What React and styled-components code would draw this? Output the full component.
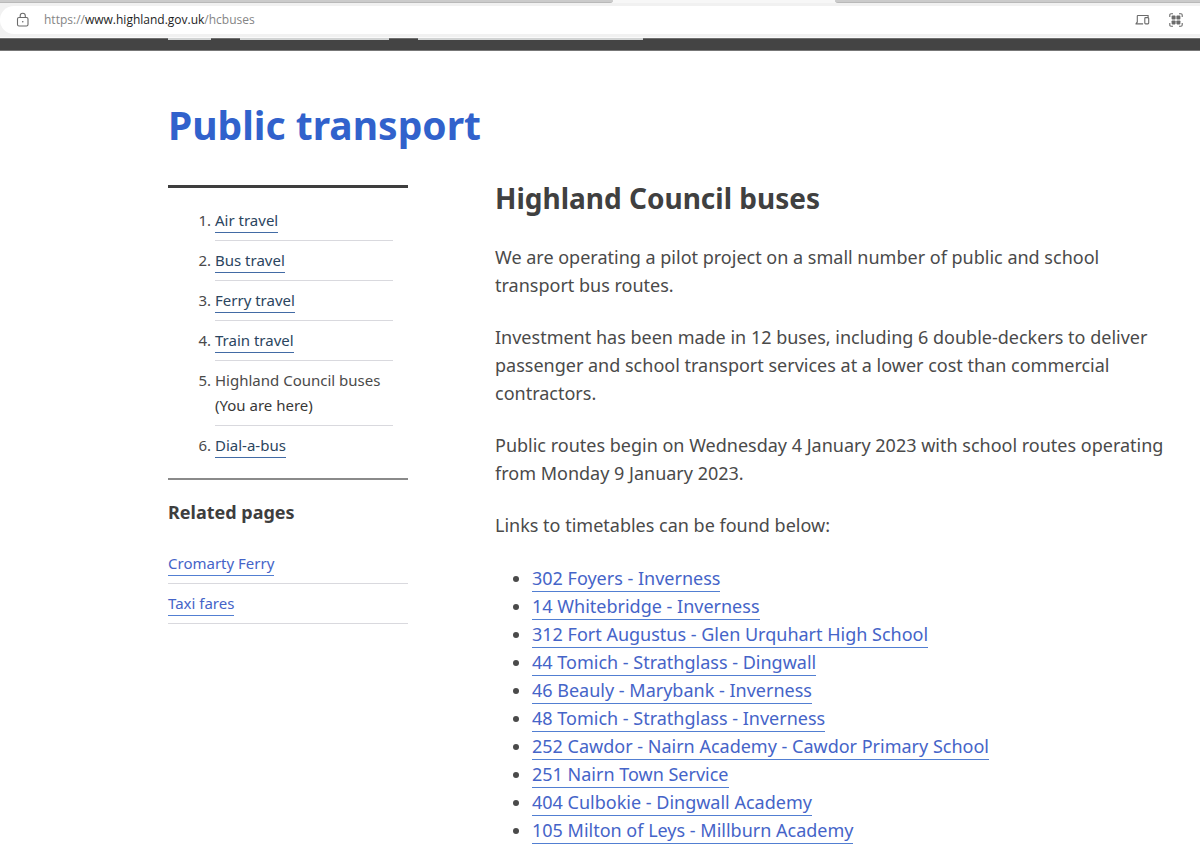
import React from "react";
import styled, { createGlobalStyle, css } from "styled-components";

const GlobalStyle = createGlobalStyle`
  *, *::before, *::after { box-sizing: border-box; }
  body {
    margin: 0;
    background: #fff;
    color: #4a4a4a;
    font-family: "Noto Sans", "Open Sans", sans-serif;
    font-size: 18px;
    line-height: 28px;
  }
`;

const TabStrip = styled.div`
  display: flex;
  height: 3px;
  background: #f7f7f7;
`;

const InactiveTab = styled.div`
  flex: ${({ $grow }) => $grow};
  background: #cbcbcb;
  border-bottom: 1px solid #b9b9b9;
  border-radius: ${({ $last }) => ($last ? "0 0 0 3px" : "0 0 3px 0")};
`;

const ActiveTab = styled.div`
  flex: 222;
`;

const AddressBar = styled.div`
  display: flex;
  padding: 3px 0 3px;
  background: #f1f1f1;
  border-bottom: 1px solid #fafafa;
`;

const AddressField = styled.div`
  display: flex;
  flex: 1;
  align-items: center;
  height: 28px;
  padding: 0 17px 0 16px;
  background: #fff;
  border-radius: 14px 0 0 14px;
`;

const ChromeButton = styled.button`
  display: flex;
  padding: 0;
  border: 0;
  background: none;
  color: #6b6b6b;
  margin-left: ${({ $gap }) => $gap || 0}px;
`;

const Address = styled.div`
  flex: 1;
  margin-left: 13px;
  color: #858585;
  font-family: "Open Sans", "Noto Sans", sans-serif;
  font-size: 12px;
  line-height: 16px;
  outline: none;
`;

const Domain = styled.span`
  color: #1d1d1d;
`;

const SiteNav = styled.div`
  display: flex;
  gap: 29px;
  height: 13px;
  padding-left: 14%;
  background: #444;
  border-top: 1px solid #6f6f6f;
  border-bottom: 1px solid #777;
`;

const NavTabEdge = styled.span`
  width: ${({ $width }) => $width}px;
  height: 2px;
  margin-top: -1px;
  background: #d2d4d4;
`;

const Page = styled.div`
  padding: 45px 30px 24px 14%;
`;

const Title = styled.h1`
  margin: 0 0 31px;
  color: #3162cc;
  font-size: 39px;
  line-height: 58px;
`;

const Columns = styled.div`
  display: grid;
  grid-template-columns: 240px minmax(0, 1fr);
  column-gap: 87px;
  align-items: start;
`;

const Contents = styled.nav`
  padding: 20px 15px 20px 47px;
  border-top: 3px solid #3e3e3e;
  border-bottom: 2px solid #8a8a8a;
`;

const TextLink = styled.a`
  color: ${({ $dark }) => ($dark ? "#2b4560" : "#4564c8")};
  border-bottom: 1px solid ${({ $dark }) => ($dark ? "#426ba5" : "#527fd2")};
  padding-bottom: 1px;
  text-decoration: none;
`;

const SideList = styled.ul`
  margin: 0;
  padding: 0;
  list-style: ${({ $numbered }) => ($numbered ? "decimal" : "none")};
  font-size: 15px;
  line-height: 25px;

  ${TextLink} {
    padding-bottom: 2px;
  }
`;

const SideItem = styled.li`
  padding: 0 0 7px;
  border-bottom: 1px solid #d9d9de;

  & + & {
    padding-top: 7px;
  }

  ${({ $plain }) =>
    $plain &&
    css`
      padding-bottom: 0;
      border-bottom: 0;
    `}
`;

const Here = styled.span`
  display: block;
  color: #383838;
`;

const RelatedHeading = styled.h2`
  margin: 18px 0 25px;
  color: #3e3e3e;
  font-size: 18px;
  line-height: 28px;
`;

const Heading = styled.h2`
  margin: 0 0 32px;
  color: #404040;
  font-size: 28px;
  line-height: 26px;
`;

const Paragraph = styled.p`
  margin: 0 0 24px;
`;

const RouteList = styled.ul`
  margin: 25px 0 0;
  padding-left: 37px;
`;

const contents = ["Air travel", "Bus travel", "Ferry travel", "Train travel", "Highland Council buses", "Dial-a-bus"];
const related = ["Cromarty Ferry", "Taxi fares"];
const routes = [
  "302 Foyers - Inverness",
  "14 Whitebridge - Inverness",
  "312 Fort Augustus - Glen Urquhart High School",
  "44 Tomich - Strathglass - Dingwall",
  "46 Beauly - Marybank - Inverness",
  "48 Tomich - Strathglass - Inverness",
  "252 Cawdor - Nairn Academy - Cawdor Primary School",
  "251 Nairn Town Service",
  "404 Culbokie - Dingwall Academy",
  "105 Milton of Leys - Millburn Academy",
];

const LockIcon = () => (
  <svg width="15" height="16" viewBox="0 0 15 16" fill="none" stroke="currentColor" strokeWidth="1.1">
    <rect x="1.5" y="5.5" width="10.5" height="8.5" rx="1.5" />
    <path d="M4.2 5.5V3.8a2.55 2.55 0 0 1 5.1 0v1.7" />
    <circle cx="6.75" cy="9.8" r="0.8" fill="currentColor" stroke="none" />
  </svg>
);

const DevicesIcon = () => (
  <svg width="15" height="12" viewBox="0 0 15 12" fill="none" stroke="currentColor" strokeWidth="1.1">
    <path d="M2.3 8.6V2.1a.6.6 0 0 1 .6-.6h10.2v1.6" />
    <path d="M0.5 9.9h7.6M2.3 8.2.8 9.9" />
    <rect x="9.8" y="3.6" width="3.9" height="6.3" rx="0.8" />
  </svg>
);

const CodeIcon = () => (
  <svg width="14" height="14" viewBox="0 0 14 14" fill="none" stroke="currentColor" strokeWidth="1.1">
    <path d="M.8 4V2Q.8.8 2 .8h2M10 .8h2q1.2 0 1.2 1.2v2M13.2 10v2q0 1.2-1.2 1.2h-2M4 13.2H2Q.8 13.2.8 12v-2" />
    <g fill="currentColor" stroke="none">
      <rect x="2.6" y="2.6" width="4" height="4" rx=".8" />
      <rect x="7.4" y="2.6" width="4" height="4" rx=".8" />
      <rect x="2.6" y="7.4" width="4" height="4" rx=".8" />
      <rect x="7.4" y="7.4" width="4" height="4" rx=".8" />
    </g>
  </svg>
);

export default function App() {
  return (
    <>
      <GlobalStyle />
      <header>
        <TabStrip>
          <InactiveTab $grow={613} />
          <ActiveTab />
          <InactiveTab $grow={365} $last />
        </TabStrip>
        <AddressBar>
          <AddressField>
            <ChromeButton aria-label="View site information"><LockIcon /></ChromeButton>
            <Address role="textbox" aria-label="Address" tabIndex={0}>
              https://<Domain>www.highland.gov.uk</Domain>/hcbuses
            </Address>
            <ChromeButton aria-label="Send to your devices"><DevicesIcon /></ChromeButton>
            <ChromeButton aria-label="Create QR code" $gap={19}><CodeIcon /></ChromeButton>
          </AddressField>
        </AddressBar>
        <SiteNav>
          <NavTabEdge $width={43} />
          <NavTabEdge $width={149} />
          <NavTabEdge $width={225} />
        </SiteNav>
      </header>
      <Page>
        <Title>Public transport</Title>
        <Columns>
          <aside>
            <Contents aria-label="Contents">
              <SideList as="ol" $numbered>
                {contents.map((label, i) => (
                  <SideItem key={label} $plain={i === contents.length - 1}>
                    {label === "Highland Council buses" ? (
                      <>{label}<Here>(You are here)</Here></>
                    ) : (
                      <TextLink href="#" $dark>{label}</TextLink>
                    )}
                  </SideItem>
                ))}
              </SideList>
            </Contents>
            <RelatedHeading>Related pages</RelatedHeading>
            <SideList>
              {related.map((label) => (
                <SideItem key={label}><TextLink href="#">{label}</TextLink></SideItem>
              ))}
            </SideList>
          </aside>
          <main>
            <Heading>Highland Council buses</Heading>
            <Paragraph>
              We are operating a pilot project on a small number of public and school transport bus routes.
            </Paragraph>
            <Paragraph>
              Investment has been made in 12 buses, including 6 double-deckers to deliver passenger and
              school transport services at a lower cost than commercial contractors.
            </Paragraph>
            <Paragraph>
              Public routes begin on Wednesday 4 January 2023 with school routes operating from Monday 9
              January 2023.
            </Paragraph>
            <Paragraph>Links to timetables can be found below:</Paragraph>
            <RouteList>
              {routes.map((route) => (
                <li key={route}><TextLink href="#">{route}</TextLink></li>
              ))}
            </RouteList>
          </main>
        </Columns>
      </Page>
    </>
  );
}
